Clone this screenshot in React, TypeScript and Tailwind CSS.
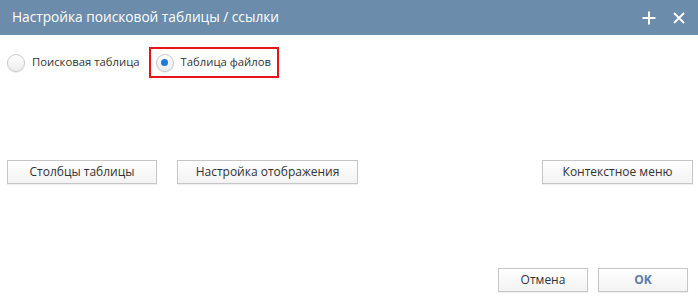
import React, { useState } from "react";

const font = { fontFamily: '"Open Sans", "Liberation Sans", sans-serif' };

function Radio({ checked, label, onClick }: { checked: boolean; label: string; onClick: () => void }) {
  return (
    <button type="button" onClick={onClick} className="flex items-center gap-[7px] text-[11.3px] text-[#333]">
      <span className="flex h-[18px] w-[18px] items-center justify-center rounded-full border border-[#c9c9c9] bg-gradient-to-b from-white to-[#ececec] shadow-[0_1px_1px_rgba(0,0,0,0.08)]">
        {checked && <span className="h-[7px] w-[7px] rounded-full bg-[#1e78e0]" />}
      </span>
      <span>{label}</span>
    </button>
  );
}

function Btn({ children, className = "text-[#333]" }: { children: React.ReactNode; className?: string }) {
  return (
    <button
      type="button"
      className={`flex h-[24px] items-center justify-center border border-[#c6c6c6] bg-gradient-to-b from-white to-[#f3f3f3] text-[12px] shadow-[0_1px_1px_rgba(0,0,0,0.06)] ${className}`}
    >
      {children}
    </button>
  );
}

export default function App() {
  const [mode, setMode] = useState<"search" | "files">("files");

  return (
    <div className="h-[299px] w-full bg-white" style={font}>
      <div className="flex h-[35px] items-center justify-between bg-[#6b8cab] pl-[12px] pr-[13px]">
        <span className="text-[13.7px] text-white">Настройка поисковой таблицы / ссылки</span>
        <div className="flex items-center gap-[17px] text-white">
          <svg viewBox="0 0 14 14" className="h-[14px] w-[14px]">
            <path d="M7 0.5v13M0.5 7h13" stroke="currentColor" strokeWidth={2} />
          </svg>
          <svg viewBox="0 0 12 12" className="h-[12px] w-[12px]">
            <path d="M1 1l10 10M11 1L1 11" stroke="currentColor" strokeWidth={1.8} />
          </svg>
        </div>
      </div>

      <div className="mt-[12px] flex items-center px-[7px]">
        <Radio checked={mode === "search"} label="Поисковая таблица" onClick={() => setMode("search")} />
        <div className="ml-[9px] flex h-[31px] items-center border-2 border-[#e8141c] pl-[5px] pr-[6px]">
          <Radio checked={mode === "files"} label="Таблица файлов" onClick={() => setMode("files")} />
        </div>
      </div>

      <div className="mt-[82px] flex items-center px-[7px]">
        <Btn className="w-[150px] text-[#333]">Столбцы таблицы</Btn>
        <Btn className="ml-[20px] w-[181px] text-[#333]">Настройка отображения</Btn>
        <Btn className="ml-auto mr-[-2px] w-[151px] text-[#333]">Контекстное меню</Btn>
      </div>

      <div className="mt-[84px] flex justify-end gap-[10px] pr-[10px]">
        <Btn className="w-[90px] text-[#333]">Отмена</Btn>
        <Btn className="w-[90px] font-bold text-[#5b7ea3]">OK</Btn>
      </div>
    </div>
  );
}
